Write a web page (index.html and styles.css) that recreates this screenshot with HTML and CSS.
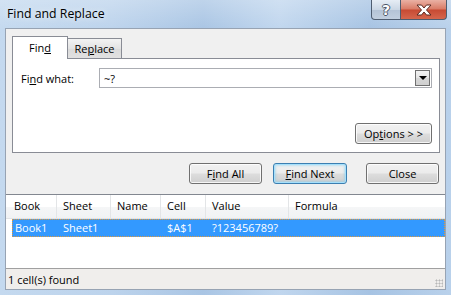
FILE: index.html
```html
<!DOCTYPE html>
<html lang="en">
<head>
  <meta charset="UTF-8" />
  <title>Find and Replace</title>
  <link rel="stylesheet" href="styles.css">
</head>
<body>
  <div class="window">
    <div class="titlebar">
      <span class="title">Find and Replace</span>
      <div class="caption-btns">
        <div class="cap help">?</div>
        <div class="cap close">
          <svg width="18" height="12" viewBox="0 0 18 12">
            <path d="M2 1h4.5l2.5 3 2.5-3H16l-4.5 5 4.5 5h-4.5L9 8l-2.5 3H2l4.5-5z" fill="#fff" stroke="#5a2a22" stroke-width="1" stroke-linejoin="round"/>
          </svg>
        </div>
      </div>
    </div>

    <div class="dialog">
      <div class="tabs">
        <div class="tab active">Fin<u>d</u></div>
        <div class="tab">Re<u>p</u>lace</div>
      </div>

      <div class="panel">
        <div class="field">
          <label class="label">Fi<u>n</u>d what:</label>
          <div class="combo">
            <span class="combo-text">~?</span>
            <div class="drop"><span class="arrow"></span></div>
          </div>
        </div>
        <button class="btn options">Op<u>t</u>ions &gt; &gt;</button>
      </div>

      <div class="actions">
        <button class="btn find-all">F<u>i</u>nd All</button>
        <button class="btn find-next default"><u>F</u>ind Next</button>
        <button class="btn close-btn">Close</button>
      </div>

      <div class="results">
        <div class="row head">
          <div class="col">Book</div>
          <div class="col">Sheet</div>
          <div class="col">Name</div>
          <div class="col">Cell</div>
          <div class="col">Value</div>
          <div class="col">Formula</div>
        </div>
        <div class="row sel">
          <div class="col">Book1</div>
          <div class="col">Sheet1</div>
          <div class="col"></div>
          <div class="col">$A$1</div>
          <div class="col">?123456789?</div>
          <div class="col"></div>
        </div>
      </div>

      <div class="status">
        <span>1 cell(s) found</span>
        <span class="grip"></span>
      </div>
    </div>
  </div>
</body>
</html>
```

FILE: styles.css
```css
body {
  margin: 0;
  font-family: 'Open Sans', 'Liberation Sans', sans-serif;
  font-size: 11px;
  color: #000;
}

.window {
  width: 451px;
  height: 295px;
  display: flex;
  flex-direction: column;
  background:
    linear-gradient(180deg, rgba(255,255,255,0.25), rgba(255,255,255,0) 30px),
    linear-gradient(90deg, #c4d9ef 0%, #bcd3ec 25%, #a9c5e4 45%, #c0d6ee 62%, #a6c3e3 82%, #b9d1eb 100%);
  overflow: hidden;
}

/* title bar */
.titlebar {
  height: 28px;
  display: flex;
  align-items: flex-start;
}

.title {
  margin: 5px 0 0 7px;
  font-size: 12.3px;
  line-height: 18px;
  text-shadow: 0 0 6px rgba(255,255,255,0.9);
}

.caption-btns {
  margin-left: auto;
  margin-right: 4px;
  display: flex;
}

.cap {
  height: 19px;
  border: 1px solid #4e5d70;
  border-top: none;
  display: flex;
  align-items: center;
  justify-content: center;
}

.help {
  width: 28px;
  border-radius: 0 0 0 4px;
  background: linear-gradient(180deg, #e6edf5 0%, #cbd7e5 50%, #b3c3d6 51%, #c1cfdf 100%);
  color: #fff;
  font-family: 'DejaVu Sans', sans-serif;
  font-weight: bold;
  font-size: 14px;
  text-shadow: 1px 0 0 #4a5566, -1px 0 0 #4a5566, 0 1px 0 #4a5566, 0 -1px 0 #4a5566;
}

.close {
  width: 45px;
  border-left: none;
  border-radius: 0 0 4px 0;
  background: linear-gradient(180deg, #eab1a4 0%, #d97b66 48%, #c74a33 52%, #d5664d 100%);
}

/* dialog body */
.dialog {
  flex: 1;
  margin: 0 5px 5px 5px;
  border: 1px solid #97a3b3;
  background: #f0f0f0;
  display: flex;
  flex-direction: column;
}

.tabs {
  display: flex;
  align-items: flex-end;
  padding: 7px 0 0 6px;
  position: relative;
  z-index: 1;
}

.tab {
  height: 19px;
  width: 53px;
  border: 1px solid #898c95;
  border-bottom: none;
  background: linear-gradient(180deg, #f3f3f3, #e3e3e3 50%, #dadada 51%, #e1e1e1);
  margin-left: -1px;
  text-align: center;
  line-height: 19px;
}

.tab.active {
  height: 22px;
  width: 54px;
  margin-left: 0;
  margin-bottom: -1px;
  background: #fff;
  position: relative;
  z-index: 2;
  line-height: 22px;
}

.panel {
  margin-left: 6px;
  width: 428px;
  height: 95px;
  box-sizing: border-box;
  border: 1px solid #898c95;
  background: #fff;
  display: flex;
  flex-direction: column;
  padding: 9px 7px 8px 8px;
}

.field {
  display: flex;
  align-items: center;
}

.label {
  width: 78px;
}

.combo {
  width: 333px;
  height: 20px;
  box-sizing: border-box;
  border: 1px solid #abadb3;
  display: flex;
  align-items: center;
}

.combo-text {
  padding-left: 4px;
  flex: 1;
}

.drop {
  width: 15px;
  height: 16px;
  margin-right: 1px;
  border: 1px solid #707070;
  background: linear-gradient(180deg, #f2f2f2, #e4e4e4 50%, #d6d6d6 51%, #d0d0d0);
  display: flex;
  align-items: center;
  justify-content: center;
  box-sizing: border-box;
}

.arrow {
  width: 0;
  height: 0;
  border-left: 4px solid transparent;
  border-right: 4px solid transparent;
  border-top: 4px solid #000;
}

/* buttons */
.btn {
  height: 21px;
  box-sizing: border-box;
  border: 1px solid #707070;
  border-radius: 3px;
  background: linear-gradient(180deg, #f2f2f2 0%, #ebebeb 48%, #dddddd 52%, #cfcfcf 100%);
  box-shadow: inset 0 0 0 1px rgba(255,255,255,0.8);
  font-family: inherit;
  font-size: 11px;
  color: #000;
  padding: 0;
}

.options {
  width: 77px;
  margin-top: auto;
  align-self: flex-end;
}

.actions {
  display: flex;
  justify-content: flex-end;
  padding: 10px 6px 0 0;
}

.find-all {
  width: 73px;
}

.find-next {
  width: 74px;
  margin-left: 11px;
}

.btn.default {
  border-color: #3c7fb1;
  box-shadow: inset 0 0 0 1px #a6e0fb, inset 0 0 2px 2px rgba(120, 200, 240, 0.4);
}

.close-btn {
  width: 73px;
  margin-left: 19px;
}

/* results list */
.results {
  flex: 1;
  margin-top: 10px;
  border-top: 1px solid #828790;
  background: #fff;
}

.row {
  display: grid;
  grid-template-columns: 51px 54px 50px 45px 83px 1fr;
}

.head {
  height: 23px;
  background: linear-gradient(180deg, #ffffff, #ffffff 50%, #f5f6f7 51%, #f1f2f4);
  border-bottom: 1px solid #e2e3e5;
  line-height: 21px;
}

.head .col {
  border-right: 1px solid #e3e5e7;
  padding-left: 6px;
}

.head .col:first-child {
  padding-left: 8px;
}

.head .col:last-child {
  border-right: none;
}

.sel {
  margin-left: 6px;
  height: 18px;
  grid-template-columns: 45px 54px 50px 45px 83px 1fr;
  background: #3399ff;
  outline: 1px dotted #e09a40;
  outline-offset: -1px;
  color: #fff;
  line-height: 17px;
}

.sel .col {
  padding-left: 6px;
}

.sel .col:first-child {
  padding-left: 3px;
}

/* status bar */
.status {
  height: 20px;
  border-top: 1px solid #a0a0a0;
  background: #f0eeec;
  display: flex;
  align-items: center;
  padding-left: 2px;
}

.grip {
  margin-left: auto;
  width: 8px;
  height: 8px;
  margin-top: 8px;
  margin-right: 2px;
  background-image: radial-gradient(circle, #b8b8b8 45%, transparent 50%);
  background-size: 3px 3px;
}
```
